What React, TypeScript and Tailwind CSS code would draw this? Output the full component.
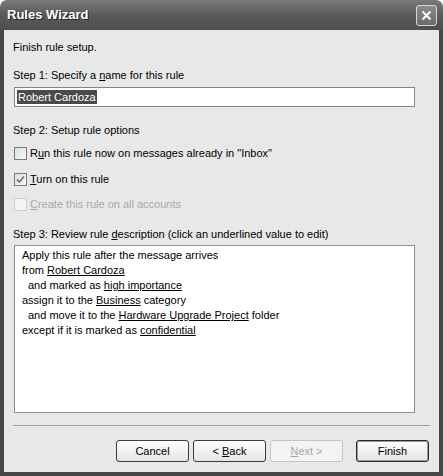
import React from "react";

const font = { fontFamily: '"Liberation Sans", Arial, sans-serif' };

function Check({ checked, disabled }: { checked?: boolean; disabled?: boolean }) {
  return (
    <span
      className={`flex h-[13px] w-[13px] shrink-0 items-center justify-center border ${
        disabled ? "border-[#cfcfcf] bg-[#f4f4f4]" : "border-[#7a7a7a] bg-gradient-to-br from-[#dcdcdc] to-[#fafafa]"
      }`}
    >
      {checked && (
        <svg width="9" height="9" viewBox="0 0 9 9">
          <path d="M1 4.5 L3.5 7 L8 1.5" fill="none" stroke="#7a7a7a" strokeWidth="1.8" />
        </svg>
      )}
    </span>
  );
}

function Btn({ children, disabled, def }: { children: React.ReactNode; disabled?: boolean; def?: boolean }) {
  return (
    <button
      type="button"
      className={`h-[22px] w-[73px] rounded-[3px] border text-[11px] leading-none ${
        disabled
          ? "border-[#c4c4c4] bg-[#f3f3f3] text-[#a8a8a8]"
          : def
          ? "border-[#2a2a2a] bg-gradient-to-b from-white to-[#e4e4e4] text-black shadow-[inset_0_0_0_1px_#9a9a9a]"
          : "border-[#3a3a3a] bg-gradient-to-b from-white to-[#e4e4e4] text-black"
      }`}
    >
      {children}
    </button>
  );
}

export default function App() {
  return (
    <div className="h-[476px] w-[443px] bg-white" style={font}>
      <div className="flex h-[476px] flex-col">
        {/* title bar */}
        <div className="flex h-[30px] shrink-0 items-center justify-between rounded-t-[7px] bg-gradient-to-b from-[#7a7a7a] via-[#5a5a5a] to-[#4e4e4e] pl-[7px] pr-[6px]">
          <span className="text-[13px] font-bold text-white [text-shadow:1px_1px_0_#222]">Rules Wizard</span>
          <span className="flex h-[21px] w-[21px] items-center justify-center rounded-[3px] border border-[#d8d8d8] bg-gradient-to-b from-[#8a8a8a] to-[#6a6a6a]">
            <svg width="11" height="11" viewBox="0 0 11 11">
              <path d="M1.5 1.5 L9.5 9.5 M9.5 1.5 L1.5 9.5" stroke="white" strokeWidth="2" />
            </svg>
          </span>
        </div>

        {/* body */}
        <div className="flex flex-1 flex-col border-x-[4px] border-b-[4px] border-[#474747] bg-[#e8e8e8] text-[11px] text-black">
          <div className="flex flex-1 flex-col pl-[9px] pt-[10px]">
            <div className="h-[14px] leading-[14px]">Finish rule setup.</div>

            <div className="mt-[14px] h-[14px] leading-[14px]">
              Step 1: Specify a <u>n</u>ame for this rule
            </div>
            <div className="ml-[1px] mt-[5px] flex h-[20px] w-[401px] items-center border border-[#858585] bg-white px-[2px]">
              <span className="bg-[#4a4a4a] px-[1px] leading-[14px] text-white">Robert Cardoza</span>
            </div>

            <div className="mt-[16px] h-[14px] leading-[14px]">Step 2: Setup rule options</div>
            <div className="ml-[1px] mt-[8px] flex h-[16px] items-center gap-[3px]">
              <Check />
              <span>
                R<u>u</u>n this rule now on messages already in "Inbox"
              </span>
            </div>
            <div className="ml-[1px] mt-[10px] flex h-[16px] items-center gap-[3px]">
              <Check checked />
              <span>
                <u>T</u>urn on this rule
              </span>
            </div>
            <div className="ml-[1px] mt-[9px] flex h-[16px] items-center gap-[3px] text-[#a9a9a9]">
              <Check disabled />
              <span>
                <u>C</u>reate this rule on all accounts
              </span>
            </div>

            <div className="mt-[15px] h-[14px] leading-[14px]">
              Step 3: Review rule <u>d</u>escription (click an underlined value to edit)
            </div>
            <div className="ml-[1px] mt-[4px] h-[168px] w-[401px] border border-[#909090] bg-white pl-[7px] pt-[2px] leading-[15px]">
              <div>Apply this rule after the message arrives</div>
              <div>
                from <u>Robert Cardoza</u>
              </div>
              <div className="pl-[6px]">
                and marked as <u>high importance</u>
              </div>
              <div>
                assign it to the <u>Business</u> category
              </div>
              <div className="pl-[6px]">
                and move it to the <u>Hardware Upgrade Project</u> folder
              </div>
              <div>
                except if it is marked as <u>confidential</u>
              </div>
            </div>

            <div className="mr-[9px] mt-[12px] h-[2px] border-t border-[#a0a0a0] border-b-white" />

            <div className="mr-[10px] mt-[13px] flex justify-end">
              <div className="flex gap-[4px]">
                <Btn>Cancel</Btn>
                <Btn>
                  &lt; <u>B</u>ack
                </Btn>
                <Btn disabled>
                  <u>N</u>ext &gt;
                </Btn>
              </div>
              <div className="ml-[13px]">
                <Btn def>Finish</Btn>
              </div>
            </div>
          </div>
        </div>
      </div>
    </div>
  );
}
